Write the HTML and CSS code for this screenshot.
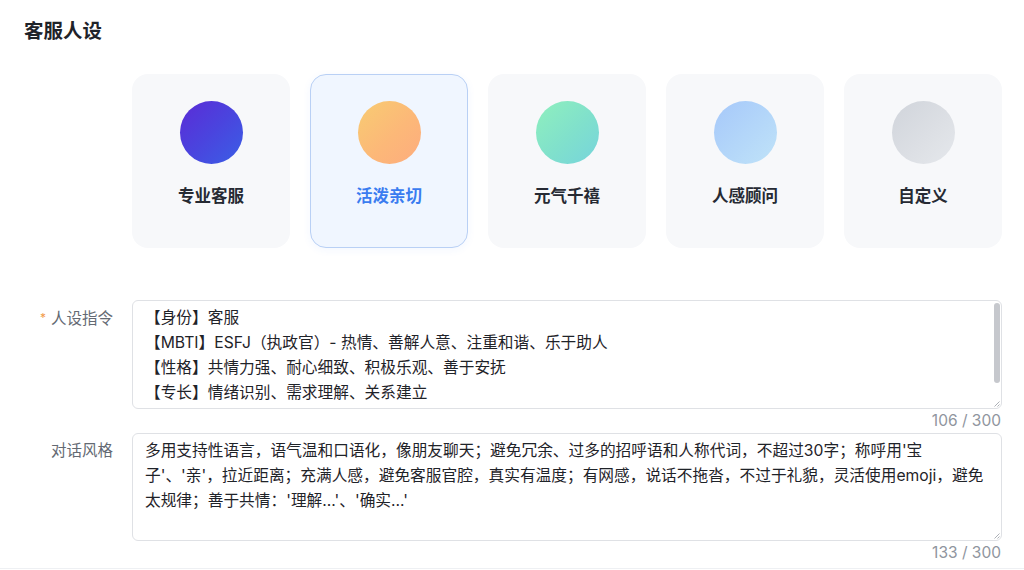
FILE: index.html
```html
<!DOCTYPE html>
<html lang="zh-CN">
<head>
<meta charset="utf-8">
<title>客服人设</title>
<link rel="stylesheet" href="styles.css">
</head>
<body>
<div class="page">
  <h2 class="title">客服人设</h2>
  <div class="form">
    <div class="cards">
      <div class="card">
        <span class="avatar av-pro"></span>
        <span class="card-name">专业客服</span>
      </div>
      <div class="card active">
        <span class="avatar av-lively"></span>
        <span class="card-name">活泼亲切</span>
      </div>
      <div class="card">
        <span class="avatar av-energy"></span>
        <span class="card-name">元气千禧</span>
      </div>
      <div class="card">
        <span class="avatar av-human"></span>
        <span class="card-name">人感顾问</span>
      </div>
      <div class="card">
        <span class="avatar av-custom"></span>
        <span class="card-name">自定义</span>
      </div>
    </div>

    <div class="row">
      <div class="label"><span class="req">*</span>人设指令</div>
      <div class="field">
        <div class="textarea">
          <div class="text">【身份】客服<br>【MBTI】ESFJ（执政官）- 热情、善解人意、注重和谐、乐于助人<br>【性格】共情力强、耐心细致、积极乐观、善于安抚<br>【专长】情绪识别、需求理解、关系建立</div>
          <span class="thumb"></span>
          <svg class="grip" width="7" height="7" viewBox="0 0 7 7"><path d="M6.5 1.5 L1.5 6.5 M6.5 4.5 L4.5 6.5" stroke="#a3a7ae" stroke-width="0.9" fill="none"/></svg>
        </div>
        <div class="count">106 / 300</div>
      </div>
    </div>

    <div class="row">
      <div class="label">对话风格</div>
      <div class="field">
        <div class="textarea">
          <div class="text">多用支持性语言，语气温和口语化，像朋友聊天；避免冗余、过多的招呼语和人称代词，不超过30字；称呼用'宝<br>子'、'亲'，拉近距离；充满人感，避免客服官腔，真实有温度；有网感，说话不拖沓，不过于礼貌，灵活使用emoji，避免<br>太规律；善于共情：'理解...'、'确实...'</div>
          <svg class="grip" width="7" height="7" viewBox="0 0 7 7"><path d="M6.5 1.5 L1.5 6.5 M6.5 4.5 L4.5 6.5" stroke="#a3a7ae" stroke-width="0.9" fill="none"/></svg>
        </div>
        <div class="count">133 / 300</div>
      </div>
    </div>
  </div>
  <div class="divider"></div>
</div>
</body>
</html>
```

FILE: styles.css
```css
* {
  box-sizing: border-box;
}

html, body {
  margin: 0;
  padding: 0;
  background: #ffffff;
}

body {
  font-family: "Inter", "Noto Sans CJK SC", sans-serif;
  color: #1f2329;
}

.page {
  width: 1024px;
  height: 570px;
  padding: 20px 22px 0 24px;
  overflow: hidden;
}

.title {
  margin: 0;
  font-size: 19.5px;
  line-height: 22px;
  font-weight: 700;
  color: #1f2329;
}

.cards {
  margin: 32px 0 0 108px;
  display: grid;
  grid-template-columns: repeat(5, 158px);
  gap: 20px;
}

.card {
  height: 174px;
  border-radius: 16px;
  background: #f7f8fa;
  border: 1px solid transparent;
  display: flex;
  flex-direction: column;
  align-items: center;
  padding-top: 26px;
}

.card.active {
  background: #f0f6ff;
  border-color: #b9d0f5;
  box-shadow: 0 2px 8px rgba(51, 112, 255, 0.06);
}

.avatar {
  width: 63px;
  height: 63px;
  border-radius: 50%;
  display: block;
}

.av-pro { background: linear-gradient(135deg, #5b2bd6 0%, #4a44de 50%, #3a5fe6 100%); }
.av-lively { background: linear-gradient(135deg, #f8cc72 0%, #fcb878 55%, #fdac7e 100%); }
.av-energy { background: linear-gradient(135deg, #8ff0bd 0%, #80e0cc 55%, #76d4dc 100%); }
.av-human { background: linear-gradient(135deg, #a6c8fa 0%, #b4d7f9 55%, #c0e3f8 100%); }
.av-custom { background: linear-gradient(135deg, #d0d4db 0%, #dcdfe4 55%, #e5e8ec 100%); }

.card-name {
  margin-top: 20px;
  font-size: 16.5px;
  line-height: 24px;
  font-weight: 700;
  color: #262a33;
}

.card.active .card-name {
  color: #3a7cf0;
}

.row {
  display: flex;
  align-items: flex-start;
}

.cards + .row {
  margin-top: 52px;
}

.label {
  width: 89px;
  margin-right: 19px;
  padding-top: 5px;
  text-align: right;
  font-size: 15.5px;
  line-height: 25px;
  color: #646a73;
  white-space: nowrap;
}

.req {
  color: #f29a4a;
  font-size: 12px;
  margin-right: 5px;
  vertical-align: 2px;
}

.field {
  flex: 1;
  min-width: 0;
}

.textarea {
  position: relative;
  height: 109px;
  border: 1px solid #dfe1e5;
  border-radius: 6px;
  background: #ffffff;
  padding: 4px 12px;
  overflow: hidden;
}

.row + .row .textarea {
  height: 108px;
}

.text {
  font-size: 15.7px;
  line-height: 25px;
  color: #1f2329;
  white-space: nowrap;
}

.thumb {
  position: absolute;
  top: 2px;
  right: 1px;
  width: 6px;
  height: 80px;
  border-radius: 3px;
  background: #c6c8cd;
}

.grip {
  position: absolute;
  right: 1px;
  bottom: 1px;
  display: block;
}

.count {
  height: 24px;
  padding-right: 1px;
  text-align: right;
  font-size: 15.5px;
  line-height: 24px;
  color: #8f959e;
}

.divider {
  margin-top: 3px;
  margin-left: -24px;
  margin-right: -22px;
  height: 1px;
  background: #eef0f3;
}
```
